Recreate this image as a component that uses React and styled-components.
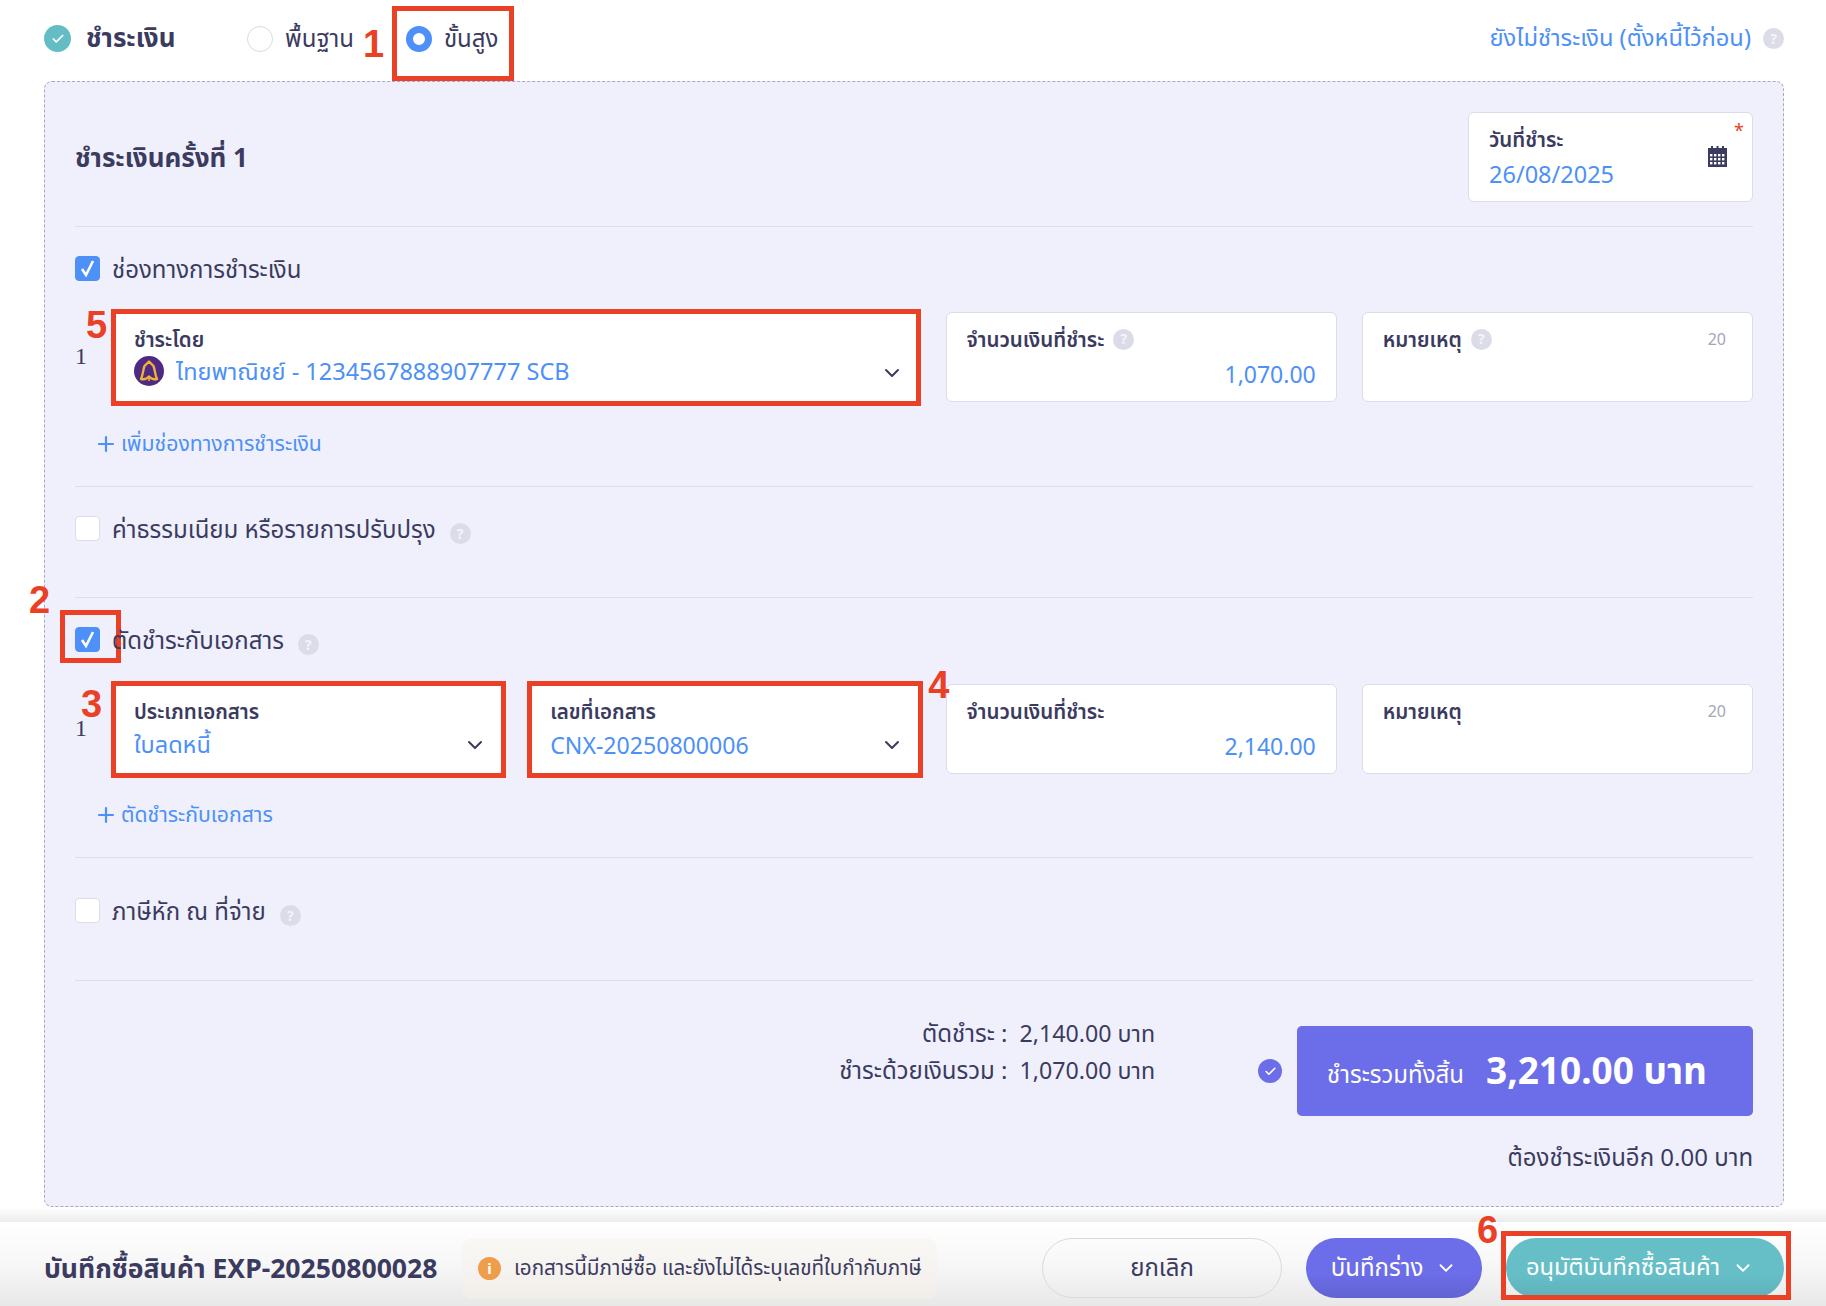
import { ChevronDown, Plus, Check } from "lucide-react";
import styled, { createGlobalStyle, css } from "styled-components";

const GlobalStyle = createGlobalStyle`
  * { box-sizing: border-box; }
  html, body { margin: 0; padding: 0; background: #fff; }
  body {
    font-family: "Noto Sans", "Noto Sans Thai", "Open Sans", "Liberation Sans", sans-serif;
    color: #3b3b5f;
  }
`

const marked = css`
  position: relative;
  &::after {
    content: "";
    position: absolute;
    inset: -4px ${p => (p.$span ? -1 : -3)}px -5px -3px;
    border: 5px solid #ea4126;
    pointer-events: none;
  }
`

const Page = styled.div`
  width: 1826px;
  height: 1306px;
  display: flex;
  flex-direction: column;
  overflow: hidden;
`

const TopBar = styled.div`
  height: 81px;
  flex: none;
  margin: 0 42px 0 44px;
  display: flex;
  align-items: center;
  padding-bottom: 4px;
`

const StatusDot = styled.span`
  width: 27px;
  height: 27px;
  border-radius: 50%;
  background: ${p => p.$bg || "#64bcc5"};
  color: #fff;
  display: inline-flex;
  align-items: center;
  justify-content: center;
  flex: none;
`

const TopTitle = styled.span`
  font-size: 26px;
  font-weight: 700;
  margin-left: 15px;
  width: 161px;
`

const RadioOption = styled.label`
  display: flex;
  align-items: center;
  gap: 12px;
  font-size: 24px;
  white-space: nowrap;

  span:last-child {
    position: relative;
    top: 1px;
  }
`

const RadioMark = styled.i`
  width: 26px;
  height: 26px;
  flex: none;
  border-radius: 50%;
  background: #fff;
  border: ${p => (p.$on ? "7px solid #4d90f7" : "1px solid #d9d9e6")};
`

const AdvancedBox = styled.div`
  position: relative;
  align-self: flex-end;
  width: 122px;
  height: 75px;
  margin: 0 0 -4px 38px;
  padding: 0 9px 10px;
  display: flex;
  align-items: center;
  border: 5px solid #ea4126;
  z-index: 2;
`

const TopLink = styled.a`
  margin-left: auto;
  display: flex;
  align-items: center;
  gap: 12px;
  font-size: 23.7px;
  color: #4d90f7;
`

const Hint = styled.span`
  width: 21px;
  height: 21px;
  border-radius: 50%;
  background: #dcdce8;
  color: #f4f4f8;
  font-size: 14px;
  font-weight: 700;
  display: inline-flex;
  align-items: center;
  justify-content: center;
  flex: none;
`

const Panel = styled.div`
  flex: none;
  height: 1126px;
  margin: 0 42px 0 44px;
  padding: 0 30px;
  background: #eff0fb;
  border: 1px dashed #a7a7c4;
  border-radius: 8px;
`

const PanelHead = styled.div`
  padding: 30px 0 24px;
  display: flex;
  align-items: center;
  justify-content: space-between;
  border-bottom: 1px solid #dcdcea;

  h2 {
    margin: 0;
    padding-top: 4px;
    font-size: 26px;
    font-weight: 700;
  }
`

const Card = styled.div`
  position: relative;
  background: #fff;
  border: 1px solid #dcdcea;
  border-radius: 6px;
  height: 90px;
  padding: 11px 20px 0;
  ${p => p.$span && "grid-column: span 2;"}
  ${p => p.$marked && marked}
`

const DateCard = styled(Card)`
  width: 285px;
`

const FieldLabel = styled.div`
  display: flex;
  align-items: center;
  gap: 9px;
  font-size: 20.5px;
  font-weight: 600;
  line-height: 30px;
  height: 30px;
`

const Counter = styled.span`
  margin-left: auto;
  font-size: 16px;
  font-weight: 400;
  color: #a5a5b8;
  margin-right: 6px;
`

const FieldValue = styled.div`
  display: flex;
  align-items: center;
  justify-content: ${p => (p.$right ? "flex-end" : "flex-start")};
  gap: 12px;
  font-size: ${p => p.$size || 23.5}px;
  line-height: 34px;
  color: #4d90f7;
  margin-top: ${p => p.$top || 0}px;
`

const Arrow = styled(ChevronDown)`
  position: absolute;
  right: 16px;
  top: 48px;
  color: #3b3b5f;
`

const Required = styled.span`
  position: absolute;
  right: 8px;
  top: 5px;
  color: #ea4126;
  font-size: 18px;
`

const CalendarWrap = styled.span`
  position: absolute;
  right: 25px;
  top: 33px;
  display: flex;
`

const Section = styled.section`
  padding-top: ${p => p.$top || 28}px;
  padding-bottom: ${p => p.$bottom || 0}px;
  min-height: ${p => p.$min || 0}px;
  border-bottom: 1px solid #dcdcea;
`

const CheckRow = styled.div`
  height: 26px;
  display: flex;
  align-items: center;
  font-size: 24px;
`

const Box = styled.span`
  position: relative;
  width: 25px;
  height: 25px;
  border-radius: 4px;
  flex: none;
  margin-right: 12px;
  display: inline-flex;
  align-items: center;
  justify-content: center;
  color: #fff;
  background: ${p => (p.$on ? "#4d90f7" : "#fff")};
  border: 1px solid ${p => (p.$on ? "#4d90f7" : "#dcdcea")};
`

const BoxMarker = styled.span`
  position: absolute;
  left: -16px;
  top: -18px;
  width: 61px;
  height: 53px;
  border: 5px solid #ea4126;
`

const CheckText = styled.span`
  position: relative;
  top: 2px;
`

const RowHint = styled(Hint)`
  margin-left: 14px;
  position: relative;
  top: 5px;
`

const FieldRow = styled.div`
  display: flex;
  margin-top: ${p => p.$top || 31}px;
`

const RowIndex = styled.div`
  width: 38px;
  flex: none;
  font-family: "Liberation Serif", serif;
  font-size: 24px;
  padding-top: 31px;
`

const Fields = styled.div`
  flex: 1;
  display: grid;
  grid-template-columns: repeat(4, 1fr);
  gap: 25px;
`

const Tag = styled.span`
  position: absolute;
  left: ${p => p.$left}px;
  top: ${p => p.$top}px;
  font-family: "Liberation Sans", sans-serif;
  font-size: 38px;
  font-weight: 700;
  line-height: 1;
  color: #ea4126;
  z-index: 2;
`

const AddLink = styled.a`
  margin: ${p => p.$top || 29}px 0 0 19px;
  height: 26px;
  display: flex;
  align-items: center;
  gap: 3px;
  font-size: 21.2px;
  color: #4d90f7;
`

const SummaryRow = styled.div`
  display: flex;
  justify-content: flex-end;
  align-items: flex-start;
  margin-top: 45px;
`

const SummaryLines = styled.div`
  display: grid;
  grid-template-columns: auto auto;
  column-gap: 12px;
  grid-auto-rows: 37px;
  align-items: center;
  margin-top: -10px;
  margin-right: 103px;
  font-size: 24px;
  text-align: right;

  span:nth-child(even) {
    font-size: 23.2px;
  }
`

const SummaryCheck = styled(StatusDot)`
  width: 24px;
  height: 24px;
  margin-top: 33px;
  margin-right: 15px;
`

const TotalBox = styled.div`
  width: 456px;
  height: 90px;
  background: #6c6de8;
  border-radius: 5px;
  color: #fff;
  display: flex;
  align-items: center;
  padding: 0 30px;
  gap: 22px;
  font-size: 24px;

  span {
    position: relative;
    top: 4px;
  }

  strong {
    position: relative;
    top: 1px;
    font-size: 37px;
    font-weight: 700;
  }
`

const Remaining = styled.div`
  margin-top: 27px;
  text-align: right;
  font-size: 24px;
  line-height: 28px;
`

const Footer = styled.div`
  position: relative;
  flex: none;
  margin-top: 15px;
  height: 84px;
  padding: 16px 42px 8px 44px;
  display: flex;
  align-items: center;
  background: linear-gradient(#fff, #f7f7f7 50%, #e8e8e8);

  &::before {
    content: "";
    position: absolute;
    left: 0;
    right: 0;
    top: -15px;
    height: 15px;
    background: linear-gradient(#fff, #ececec);
  }
`

const FooterTitle = styled.span`
  position: relative;
  top: 2px;
  font-size: 26.6px;
  font-weight: 700;
  width: 418px;
  flex: none;
  white-space: nowrap;
`

const Notice = styled.div`
  width: 475px;
  height: 61px;
  flex: none;
  border-radius: 10px;
  background: linear-gradient(#faf8f5, #f1eeea);
  display: flex;
  align-items: center;
  padding: 0 16px;
  gap: 13px;
  font-size: 20.6px;
  white-space: nowrap;
`

const NoticeDot = styled.span`
  width: 23px;
  height: 23px;
  border-radius: 50%;
  background: #ee9d4a;
  color: #fff;
  font-size: 15px;
  font-weight: 700;
  display: inline-flex;
  align-items: center;
  justify-content: center;
  flex: none;
`

const Actions = styled.div`
  margin-left: auto;
  display: flex;
  gap: 24px;
`

const Pill = styled.button`
  position: relative;
  height: 60px;
  width: ${p => p.$w}px;
  padding: 0 ${p => p.$pr || 0}px 0 0;
  border-radius: 30px;
  font: inherit;
  font-size: ${p => p.$size || 24}px;
  display: flex;
  align-items: center;
  justify-content: center;
  gap: 12px;
  border: ${p => (p.$bg ? "none" : "1px solid #d9d9e4")};
  background: ${p => p.$bg || "transparent"};
  color: ${p => (p.$bg ? "#fff" : "#3b3b5f")};
`

const PillMarker = styled.span`
  position: absolute;
  inset: -7px -7px -2px -5px;
  border: 5px solid #ea4126;
`

const CheckTick = ({ size = 14 }) => <Check size={size} strokeWidth={3} />;

const BoxTick = () => (
  <svg width="19" height="21" viewBox="0 0 19 21" fill="none">
    <path d="M4 11 L8 17 L15 3" stroke="#fff" strokeWidth="2.6" />
  </svg>
);

const CalendarIcon = () => (
  <svg width="19" height="21" viewBox="0 0 19 21">
    <rect x="3" y="0" width="2" height="3" fill="#3b3b5f" />
    <rect x="8.5" y="0" width="2" height="3" fill="#3b3b5f" />
    <rect x="14" y="0" width="2" height="3" fill="#3b3b5f" />
    <rect x="0" y="2" width="19" height="19" fill="#3b3b5f" />
    {[8, 12, 16].map(y => [2, 6, 10, 14].map(x => (
      <rect key={`${x}-${y}`} x={x} y={y} width="2.4" height="2.4" fill="#fff" />
    )))}
  </svg>
);

const BankLogo = () => (
  <svg width="30" height="30" viewBox="0 0 30 30" style={{ flex: "none" }}>
    <circle cx="15" cy="15" r="15" fill="#4e2a84" />
    <path d="M15 5.5 L10.5 10 C9 14 9 19 7 23 C10 23.5 13 23 15 20.5 C17 23 20 23.5 23 23 C21 19 21 14 19.5 10 Z" fill="none" stroke="#f2b233" strokeWidth="2.4" strokeLinejoin="round" />
    <path d="M15 20 V25" stroke="#f2b233" strokeWidth="1.6" />
  </svg>
);

const Field = ({ label, hint, counter, value, right, top, ...rest }) => (
  <Card {...rest}>
    <FieldLabel>
      {label}
      {hint && <Hint>?</Hint>}
      {counter && <Counter>{counter}</Counter>}
    </FieldLabel>
    <FieldValue $right={right} $top={top} $size={23}>{value}</FieldValue>
  </Card>
);

export default function App() {
  return (
    <Page>
      <GlobalStyle />
      <TopBar>
        <StatusDot><CheckTick /></StatusDot>
        <TopTitle>ชำระเงิน</TopTitle>
        <RadioOption><RadioMark /><span>พื้นฐาน</span></RadioOption>
        <AdvancedBox>
          <RadioOption><RadioMark $on /><span>ขั้นสูง</span></RadioOption>
          <Tag $left={-34} $top={14}>1</Tag>
        </AdvancedBox>
        <TopLink>ยังไม่ชำระเงิน (ตั้งหนี้ไว้ก่อน) <Hint>?</Hint></TopLink>
      </TopBar>

      <Panel>
        <PanelHead>
          <h2>ชำระเงินครั้งที่ 1</h2>
          <DateCard>
            <FieldLabel>วันที่ชำระ</FieldLabel>
            <FieldValue $top={3}>26/08/2025</FieldValue>
            <Required>*</Required>
            <CalendarWrap><CalendarIcon /></CalendarWrap>
          </DateCard>
        </PanelHead>

        <Section $bottom={29}>
          <CheckRow>
            <Box $on><BoxTick /></Box>
            <CheckText>ช่องทางการชำระเงิน</CheckText>
          </CheckRow>
          <FieldRow>
            <RowIndex>1</RowIndex>
            <Fields>
              <Card $span $marked>
                <Tag $left={-28} $top={-7}>5</Tag>
                <FieldLabel>ชำระโดย</FieldLabel>
                <FieldValue><BankLogo />ไทยพาณิชย์ - 1234567888907777 SCB</FieldValue>
                <Arrow size={24} strokeWidth={2} />
              </Card>
              <Field label="จำนวนเงินที่ชำระ" hint value="1,070.00" right top={3} />
              <Field label="หมายเหตุ" hint counter="20" />
            </Fields>
          </FieldRow>
          <AddLink><Plus size={24} strokeWidth={2.2} />เพิ่มช่องทางการชำระเงิน</AddLink>
        </Section>

        <Section $min={111}>
          <CheckRow>
            <Box />
            <CheckText>ค่าธรรมเนียม หรือรายการปรับปรุง</CheckText>
            <RowHint>?</RowHint>
          </CheckRow>
        </Section>

        <Section $bottom={29}>
          <CheckRow>
            <Box $on><BoxTick /><BoxMarker /><Tag $left={-47} $top={-47}>2</Tag></Box>
            <CheckText>ตัดชำระกับเอกสาร</CheckText>
            <RowHint>?</RowHint>
          </CheckRow>
          <FieldRow $top={32}>
            <RowIndex>1</RowIndex>
            <Fields>
              <Card $marked>
                <Tag $left={-33} $top={0}>3</Tag>
                <FieldLabel>ประเภทเอกสาร</FieldLabel>
                <FieldValue $top={1}>ใบลดหนี้</FieldValue>
                <Arrow size={24} strokeWidth={2} />
              </Card>
              <Card $marked>
                <Tag $left={398} $top={-19}>4</Tag>
                <FieldLabel>เลขที่เอกสาร</FieldLabel>
                <FieldValue $top={2} $size={23.1}>CNX-20250800006</FieldValue>
                <Arrow size={24} strokeWidth={2} />
              </Card>
              <Field label="จำนวนเงินที่ชำระ" value="2,140.00" right top={3} />
              <Field label="หมายเหตุ" counter="20" />
            </Fields>
          </FieldRow>
          <AddLink $top={28}><Plus size={24} strokeWidth={2.2} />ตัดชำระกับเอกสาร</AddLink>
        </Section>

        <Section $top={39} $min={123}>
          <CheckRow>
            <Box />
            <CheckText>ภาษีหัก ณ ที่จ่าย</CheckText>
            <RowHint>?</RowHint>
          </CheckRow>
        </Section>

        <SummaryRow>
          <SummaryLines>
            <span>ตัดชำระ :</span><span>2,140.00 บาท</span>
            <span>ชำระด้วยเงินรวม :</span><span>1,070.00 บาท</span>
          </SummaryLines>
          <SummaryCheck $bg="#6c6de8"><CheckTick size={13} /></SummaryCheck>
          <TotalBox>
            <span>ชำระรวมทั้งสิ้น</span>
            <strong>3,210.00 บาท</strong>
          </TotalBox>
        </SummaryRow>
        <Remaining>ต้องชำระเงินอีก 0.00 บาท</Remaining>
      </Panel>

      <Footer>
        <FooterTitle>บันทึกซื้อสินค้า EXP-20250800028</FooterTitle>
        <Notice>
          <NoticeDot>i</NoticeDot>
          เอกสารนี้มีภาษีซื้อ และยังไม่ได้ระบุเลขที่ใบกำกับภาษี
        </Notice>
        <Actions>
          <Pill $w={240}>ยกเลิก</Pill>
          <Pill $w={176} $bg="linear-gradient(#6c6de8 60%, #6263d2)">บันทึกร่าง <ChevronDown size={22} /></Pill>
          <Pill $w={278} $pr={10} $size={23.7} $bg="linear-gradient(#66bfc7 60%, #5eb0ba)">
            อนุมัติบันทึกซื้อสินค้า <ChevronDown size={22} />
            <PillMarker />
            <Tag $left={-29} $top={-27}>6</Tag>
          </Pill>
        </Actions>
      </Footer>
    </Page>
  );
}
